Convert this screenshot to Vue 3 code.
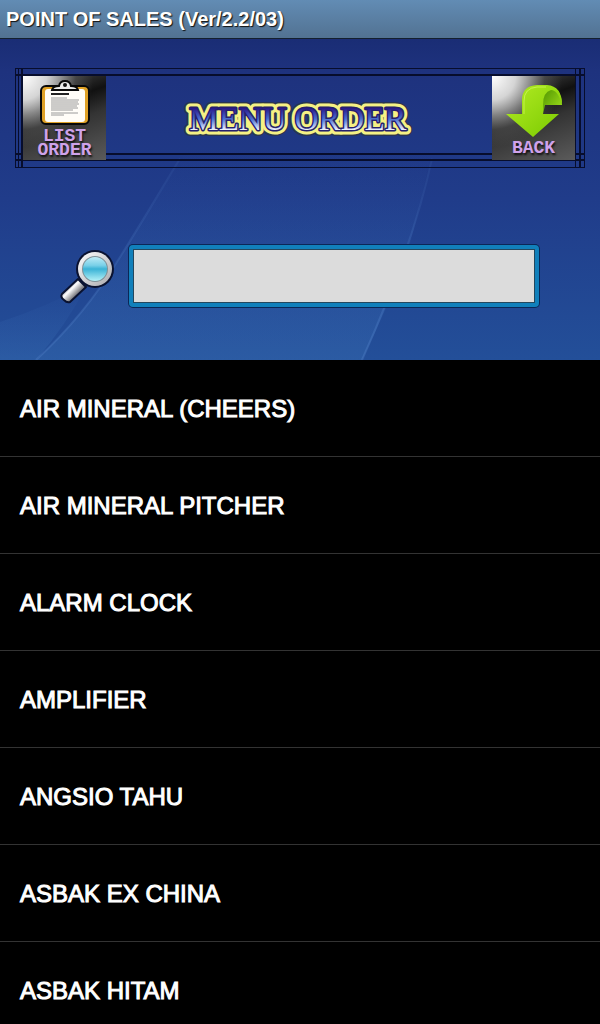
<script setup>
import { computed, ref } from 'vue';

const search = ref('');

const items = [
  'AIR MINERAL (CHEERS)',
  'AIR MINERAL PITCHER',
  'ALARM CLOCK',
  'AMPLIFIER',
  'ANGSIO TAHU',
  'ASBAK EX CHINA',
  'ASBAK HITAM',
];

const filtered = computed(() =>
  items.filter((item) => item.includes(search.value.trim().toUpperCase()))
);
</script>

<template>
  <div class="app">
    <header class="title-bar">POINT OF SALES (Ver/2.2/03)</header>

    <section class="top">
      <svg class="wallpaper" viewBox="0 0 600 322" preserveAspectRatio="none" aria-hidden="true">
        <defs>
          <linearGradient id="sky" x1="0" y1="0" x2="0" y2="1">
            <stop offset="0" stop-color="#1a2d75" />
            <stop offset="0.1" stop-color="#1e327e" />
            <stop offset="0.5" stop-color="#203c8a" />
            <stop offset="1" stop-color="#234f99" />
          </linearGradient>
          <linearGradient id="beam" x1="0" y1="0" x2="0" y2="1">
            <stop offset="0" stop-color="#3f6fc0" stop-opacity="0" />
            <stop offset="1" stop-color="#3f78bb" stop-opacity="0.3" />
          </linearGradient>
          <linearGradient id="edge" x1="0" y1="0" x2="0" y2="1">
            <stop offset="0" stop-color="#5585cc" stop-opacity="0.1" />
            <stop offset="1" stop-color="#5585cc" stop-opacity="0.35" />
          </linearGradient>
        </defs>
        <rect width="600" height="322" fill="url(#sky)" />
        <path d="M188 110 Q138 190 118 222 Q84 278 36 322 H362 Q402 238 410 205 Q422 160 432 110 Z" fill="url(#beam)" />
        <path d="M0 284 Q48 268 88 246 Q64 290 36 322 H0 Z" fill="url(#beam)" />
        <path d="M180 120 Q138 190 118 222 Q84 278 36 322" fill="none" stroke="url(#edge)" stroke-width="2" />
        <path d="M432 120 Q414 205 362 322" fill="none" stroke="url(#edge)" stroke-width="2" />
      </svg>

      <div class="banner">
        <button class="tile" type="button">
          <svg width="54" height="46" viewBox="0 0 54 46" aria-hidden="true">
            <rect x="3" y="6" width="48" height="38" rx="5" fill="#dfa126" stroke="#080808" stroke-width="2" />
            <rect x="7" y="9" width="40" height="33" rx="3" fill="#fffdf8" />
            <path d="M14 10 Q15 6 21 6 Q22 1 27 1 Q32 1 33 6 Q39 6 40 10 Z" fill="#ececec" stroke="#080808" stroke-width="2" />
            <circle cx="27" cy="5" r="2" fill="#111" />
            <path d="M13 14 H31" stroke="#222" stroke-width="2" />
            <path d="M13 18 H29 M13 20 H41 M13 22 H40 M13 24 H41 M13 26 H39 M13 28 H40 M13 30 H35 M13 33 H40 M13 35 H26" stroke="#9a9a9a" stroke-width="1" />
          </svg>
          <span class="tile-label">LIST<br />ORDER</span>
        </button>

        <h1 class="heading">
          <svg class="heading-art" width="228" height="56" viewBox="0 0 228 56">
            <defs>
              <linearGradient id="letters" x1="0" y1="0" x2="0" y2="1">
                <stop offset="0.2" stop-color="#2a168a" />
                <stop offset="0.5" stop-color="#4a6fd0" />
                <stop offset="0.8" stop-color="#eef2ff" />
              </linearGradient>
            </defs>
            <g class="heading-text">
              <text class="shadow" x="113" y="40">MENU ORDER</text>
              <text class="glow" x="113" y="40">MENU ORDER</text>
              <text class="ink" x="113" y="40">MENU ORDER</text>
            </g>
          </svg>
        </h1>

        <button class="tile tile-back" type="button">
          <svg width="58" height="54" viewBox="0 0 58 54" aria-hidden="true">
            <defs>
              <linearGradient id="arrow" x1="0" y1="0" x2="1" y2="1">
                <stop offset="0" stop-color="#b4ec24" />
                <stop offset="1" stop-color="#79c900" />
              </linearGradient>
              <linearGradient id="curl" x1="0" y1="0" x2="1" y2="1">
                <stop offset="0" stop-color="#4d9200" />
                <stop offset="1" stop-color="#a3e31c" />
              </linearGradient>
            </defs>
            <path d="M38 30 V18 Q38 4 48 3 Q57 8 57 21 H40 Z" fill="url(#curl)" />
            <path d="M17 30 V16 Q17 2 32 1 H42 Q57 2 57 21 Q53 6 46 6 Q38 8 38 21 V30 H54 L28 53 L1 30 Z" fill="url(#arrow)" />
            <path d="M19 30 V17 Q19 4 32 3 H41" fill="none" stroke="#dcff6c" stroke-opacity="0.6" />
          </svg>
          <span class="tile-label">BACK</span>
        </button>
      </div>

      <div class="search-row">
        <label class="search-label" for="search" aria-label="Search">
          <svg width="56" height="56" viewBox="0 0 56 56" aria-hidden="true">
            <defs>
              <linearGradient id="rim" x1="0" y1="0" x2="1" y2="1">
                <stop offset="0" stop-color="#ffffff" />
                <stop offset="1" stop-color="#a9a9ad" />
              </linearGradient>
              <linearGradient id="handle" gradientUnits="userSpaceOnUse" x1="8" y1="37" x2="16" y2="45">
                <stop offset="0" stop-color="#9b9b9f" />
                <stop offset="0.4" stop-color="#ffffff" />
                <stop offset="1" stop-color="#858589" />
              </linearGradient>
              <linearGradient id="lens" x1="0" y1="0" x2="0" y2="1">
                <stop offset="0" stop-color="#bdebf6" />
                <stop offset="0.35" stop-color="#79d0e8" />
                <stop offset="0.5" stop-color="#3bb3d6" />
                <stop offset="1" stop-color="#b5f2f8" />
              </linearGradient>
            </defs>
            <path d="M17 31 L25 39 L9 54 Q6 55 3 52 Q-1 49 1 46 Z" fill="url(#handle)" stroke="#0a1230" stroke-width="2" stroke-linejoin="round" />
            <circle cx="34" cy="21" r="19" fill="#0a1230" />
            <circle cx="34" cy="21" r="17" fill="url(#rim)" />
            <circle cx="34" cy="21" r="13" fill="#7d9097" />
            <circle cx="34" cy="21" r="12" fill="url(#lens)" />
          </svg>
        </label>
        <input id="search" v-model="search" class="search-input" type="text" autocomplete="off" />
      </div>
    </section>

    <ul class="list">
      <li v-for="item in filtered" :key="item" class="list-item">{{ item }}</li>
    </ul>
  </div>
</template>

<style>
body {
  margin: 0;
  background: #000;
}
</style>

<style scoped>
.app {
  display: flex;
  flex-direction: column;
  height: 100vh;
  background: #000;
  color: #fff;
  font-family: 'Liberation Sans', Arial, sans-serif;
}

.title-bar {
  flex: none;
  padding: 0 6px;
  border-bottom: 1px solid #14202f;
  background: linear-gradient(#628cb4, #527292);
  font-size: 20px;
  font-weight: 700;
  line-height: 38px;
  text-shadow: 1px 1px 1px #111;
}

.top {
  position: relative;
  flex: none;
  padding: 29px 15px 53px;
}

.wallpaper {
  position: absolute;
  inset: 0;
  width: 100%;
  height: 100%;
}

/* Banner: the frame lines cross each other at the corners */
.banner {
  --line: #070d2c;
  position: relative;
  display: flex;
  align-items: center;
  justify-content: space-between;
  padding: 7px 9px 7px 7px;
  border: 1px solid var(--line);
  background:
    linear-gradient(var(--line), var(--line)) 0 5px / 100% 2px no-repeat,
    linear-gradient(var(--line), var(--line)) 0 calc(100% - 12px) / 100% 2px no-repeat,
    linear-gradient(var(--line), var(--line)) 0 calc(100% - 6px) / 100% 2px no-repeat,
    linear-gradient(var(--line), var(--line)) 2px 0 / 1px 100% no-repeat,
    linear-gradient(var(--line), var(--line)) 5px 0 / 2px 100% no-repeat,
    linear-gradient(var(--line), var(--line)) calc(100% - 3px) 0 / 2px 100% no-repeat,
    linear-gradient(var(--line), var(--line)) calc(100% - 8px) 0 / 1px 100% no-repeat;
}

.tile {
  display: flex;
  flex-direction: column;
  align-items: center;
  justify-content: flex-start;
  gap: 3px;
  width: 83px;
  height: 84px;
  padding: 4px 0 0;
  border: none;
  background:
    radial-gradient(ellipse at 0 0, #fff 0, #d5d5d5 20%, rgba(90, 90, 90, 0.5) 45%, transparent 60%),
    linear-gradient(160deg, #555 0%, #111 35%, #333 55%, #5b5b5b 100%);
  cursor: pointer;
}

.tile-back {
  padding-top: 8px;
}

.tile svg {
  flex: none;
}

.tile-label {
  color: #cfa2ea;
  font-family: 'Liberation Mono', 'Courier New', monospace;
  font-size: 18px;
  font-weight: 700;
  line-height: 14px;
  text-shadow: 1px 2px 2px #111;
}

.heading {
  margin: 0;
}

.heading-art {
  display: block;
  overflow: visible;
}

.heading-text {
  font-family: 'Liberation Serif', 'Times New Roman', serif;
  font-size: 33px;
  font-weight: 400;
  text-anchor: middle;
  stroke-linejoin: round;
}

.shadow {
  fill: none;
  stroke: #2b3550;
  stroke-width: 12px;
}

.glow {
  fill: none;
  stroke: #f5f184;
  stroke-width: 9px;
}

.ink {
  fill: url(#letters);
  stroke: #26206c;
  stroke-width: 3px;
  paint-order: stroke;
}

.search-row {
  position: relative;
  display: flex;
  align-items: center;
  gap: 12px;
  margin: 77px 46px 0;
}

.search-label,
.search-label svg {
  display: block;
  overflow: visible;
}

.search-input {
  box-sizing: border-box;
  flex: 1;
  min-width: 0;
  height: 62px;
  padding: 0 12px;
  border: 4px solid #1180bb;
  border-radius: 4px;
  outline: none;
  background: #dcdcdc;
  box-shadow: inset 0 0 0 1px #24485e, 0 0 0 1px #0b2757;
  color: #111;
  font-family: inherit;
  font-size: 24px;
}

.list {
  flex: 1;
  min-height: 0;
  margin: 0;
  padding: 0;
  overflow-y: auto;
  scrollbar-width: none;
  list-style: none;
}

.list-item {
  padding: 2px 20px 0;
  border-bottom: 1px solid #333;
  font-size: 24px;
  line-height: 94px;
  -webkit-text-stroke: 1px #fff;
}
</style>
